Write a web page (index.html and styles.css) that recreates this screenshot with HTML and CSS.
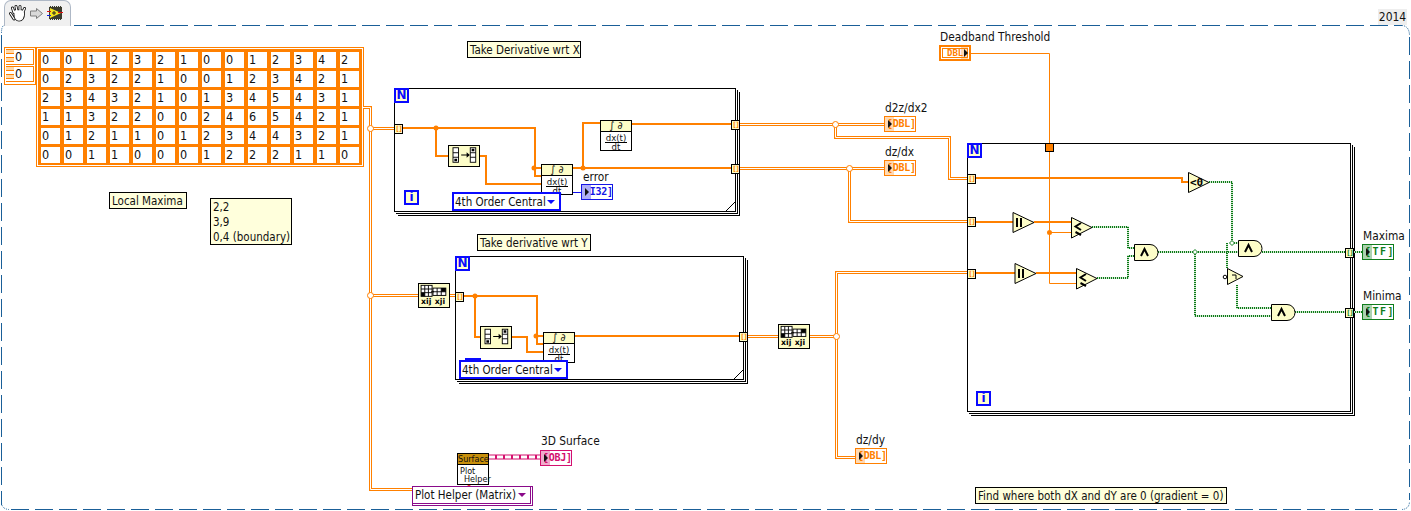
FILE: index.html
```html
<!DOCTYPE html>
<html lang="en">
<head>
<meta charset="utf-8">
<title>Block diagram</title>
<link rel="stylesheet" href="styles.css">
</head>
<body>
<div class="canvas">
  <svg class="defs" width="0" height="0" aria-hidden="true">
    <defs>
      <symbol id="rev" viewBox="0 0 32 22">
        <g class="ic">
          <rect x="5" y="3" width="6" height="16"/><path d="M5 8.500H11M5 13.500H11"/>
          <rect x="24" y="3" width="6" height="16"/><path d="M24 8.500H30M24 13.500H30"/>
        </g>
        <path class="ic-b" d="M6.500 15h3v3h-3zM25.500 4h3v3h-3z"/>
        <path class="ic-b" d="M14 10.500H20V8L23.500 11L20 14V11.500H14Z"/>
      </symbol>
      <symbol id="tr" viewBox="0 0 32 24">
        <g class="ic">
          <rect x="3" y="2" width="12" height="12"/><path d="M3 6H15M3 10H15M7 2V14M11 2V14"/>
          <rect x="16" y="5" width="14" height="8"/><path d="M16 9H30M20.500 5V13M25 5V13"/>
        </g>
        <path class="ic-b" d="M3 10h4v4h-4zM25 5h5v4h-5zM14 8.500h3v1h-3z"/>
        <text class="ic-t" x="3" y="22">xij</text>
        <text class="ic-t" x="18" y="22">xji</text>
      </symbol>
    </defs>
  </svg>

  <svg class="frame" width="1411" height="511" aria-hidden="true">
    <path class="dash" d="M74 25.500H1402"/>
    <path class="dash" d="M1.500 35V505"/>
    <path class="dash" d="M11 509.500H1400"/>
    <path class="dash" d="M1409.500 37V500"/>
    <path class="dots" d="M1.500 33Q1.500 26 4 25.500M1402 25.500Q1409 26 1409.500 35M1.500 503Q2 509 9 509.500M1402 509.500Q1409 509 1409.500 502"/>
  </svg>

  <div class="tab">
    <svg width="67" height="25" viewBox="4 0 67 25" aria-label="toolbar icons">
      <g class="hand-o">
        <path d="M14 19L10.500 13.500M14 12.500L12.500 8M17 11L16 6.500M20 11L20 6.500M23 12L24.500 8.500M15 14C15 18 17 20 19 20C22 20 23.500 17 23.500 13L22 11L15 11Z"/>
      </g>
      <g class="hand-i">
        <path d="M14 19L10.500 13.500M14 12.500L12.500 8M17 11L16 6.500M20 11L20 6.500M23 12L24.500 8.500M15 14C15 18 17 20 19 20C22 20 23.500 17 23.500 13L22 11L15 11Z"/>
      </g>
      <polygon class="run" points="30.500,11 36.500,11 36.500,8.500 42.500,13.500 36.500,18.500 36.500,16 30.500,16"/>
      <rect class="film" x="49" y="6" width="13" height="14"/>
      <path class="perf" d="M49 6.500H62M49 19.500H62"/>
      <polygon class="vi-tri" points="50,8 61,13 50,18"/>
      <path class="vi-m" d="M52 13H56M54 11V15"/>
      <path class="vi-r" d="M47 11.500H51M58 12.500H63"/>
      <path class="vi-b" d="M47 15.500H51"/>
    </svg>
  </div>
  <div class="version">2014</div>

  <div class="index">
    <div class="index-row"><span class="inc"></span><span class="idx-val">0</span></div>
    <div class="index-row"><span class="inc"></span><span class="idx-val">0</span></div>
  </div>
  <div class="array">
    <div class="array-grid">
      <span>0</span><span>0</span><span>1</span><span>2</span><span>3</span><span>2</span><span>1</span><span>0</span><span>0</span><span>1</span><span>2</span><span>3</span><span>4</span><span>2</span>
      <span>0</span><span>2</span><span>3</span><span>2</span><span>2</span><span>1</span><span>0</span><span>0</span><span>1</span><span>2</span><span>3</span><span>4</span><span>2</span><span>1</span>
      <span>2</span><span>3</span><span>4</span><span>3</span><span>2</span><span>1</span><span>0</span><span>1</span><span>3</span><span>4</span><span>5</span><span>4</span><span>3</span><span>1</span>
      <span>1</span><span>1</span><span>3</span><span>2</span><span>2</span><span>0</span><span>0</span><span>2</span><span>4</span><span>6</span><span>5</span><span>4</span><span>2</span><span>1</span>
      <span>0</span><span>1</span><span>2</span><span>1</span><span>1</span><span>0</span><span>1</span><span>2</span><span>3</span><span>4</span><span>4</span><span>3</span><span>2</span><span>1</span>
      <span>0</span><span>0</span><span>1</span><span>1</span><span>0</span><span>0</span><span>0</span><span>1</span><span>2</span><span>2</span><span>2</span><span>1</span><span>1</span><span>0</span>
    </div>
  </div>

  <div class="note c-lm">Local Maxima</div>
  <div class="note c-pts">2,2<br>3,9<br>0,4 (boundary)</div>
  <div class="note c-x">Take Derivative wrt X</div>
  <div class="note c-y">Take derivative wrt Y</div>
  <div class="note c-g">Find where both dX and dY are 0 (gradient = 0)</div>

  <!-- structures -->
  <div class="loop l1"><span class="ear"></span></div>
  <div class="loop l2"><span class="ear"></span></div>
  <div class="loop l3"></div>

  <!-- wires and gates -->
  <svg class="wires" width="1411" height="511" aria-hidden="true">
    <defs>
      <path id="dw" d="M363 107.500H370.500V489.500H412M370 128.500H395M370 295.500H418M450 295.500H456M739 124.500H884M739 168.500H884M835.500 124.500V137.500H949.500V178.500H967M849.500 168.500V221.500H967M743 336.500H778M810 336.500H836.500M967 272.500H836.500V457.500H855"/>
      <path id="gw" d="M1092 227H1128V248H1134M1097 278H1128V256H1134M1158 252H1238M1262 252H1345M1353 252H1362M1295 312H1345M1353 312H1362M1195 252V316H1271M1209 182H1232V243H1238M1227 243V268M1237 285V308H1271"/>
    </defs>
    <use class="dw-o" href="#dw"/>
    <use class="dw-i" href="#dw"/>
    <g class="nodes">
      <circle cx="370.500" cy="128.500" r="3"/>
      <circle cx="370.500" cy="295.500" r="3"/>
      <circle cx="835.500" cy="124.500" r="3"/>
      <circle cx="849.500" cy="168.500" r="3"/>
      <circle cx="836.500" cy="336.500" r="3"/>
    </g>
    <path class="w2" d="M403 128H535V176H541M436 128V156H448M480 156H486V184H541M534 168H541M573 168H731M583 168V123H600M632 124H731M464 296H537V344H543M475 296V337H480M512 337H527V352H543M536 336H543M575 336H739M975 178H1182V182H1188M975 222H1013M1034 222H1071M975 273H1015M1036 273H1076"/>
    <g class="dots-o">
      <circle cx="436" cy="128" r="2.500"/><circle cx="534" cy="168" r="2.500"/><circle cx="583" cy="168" r="2.500"/>
      <circle cx="475" cy="296" r="2.500"/><circle cx="536" cy="336" r="2.500"/><circle cx="1049.500" cy="232.500" r="2.500"/>
    </g>
    <path class="w1" d="M971 53.500H1049.500V283.500H1076M1049.500 232.500H1071"/>
    <path class="wb" d="M573 192.500H581"/>
    <use class="wg-u" href="#gw"/>
    <use class="wg" href="#gw"/>
    <path class="diam" d="M1195 249.500L1197.500 252L1195 254.500L1192.500 252ZM1232 240.500L1234.500 243L1232 245.500L1229.500 243Z"/>
    <path class="wp-o" d="M489 457H541"/>
    <path class="wp-i" d="M489 457H541"/>

    <!-- gates -->
    <g class="gate">
      <polygon points="1013,212.500 1034,222.500 1013,232.500"/>
      <polygon points="1015,263.500 1036,273.500 1015,283.500"/>
      <polygon points="1071.500,217.500 1092,227.500 1071.500,238"/>
      <polygon points="1076.500,268.500 1097,278.500 1076.500,289"/>
      <polygon points="1188.500,172.500 1209,182.500 1188.500,192.500"/>
      <polygon points="1227.500,268.500 1243,276.500 1227.500,284.500"/>
      <path d="M1134.500 244.500H1150A8 8 0 0 1 1150 260.500H1134.500Z"/>
      <path d="M1238.500 240.500H1254A8 8 0 0 1 1254 256.500H1238.500Z"/>
      <path d="M1271.500 304.500H1287A8 8 0 0 1 1287 320.500H1271.500Z"/>
    </g>
    <path class="mark" d="M1017 218V227M1021 218V227M1019 269V278M1023 269V278"/>
    <path class="mark" d="M1081 223L1075.500 226.500L1081 230M1075.500 232L1081 235M1086 274L1080.500 277.500L1086 281M1080.500 283L1086 286"/>
    <path class="mark" d="M1141 256L1144.500 249L1148 256M1245 252L1248.500 245L1252 252M1278 316L1281.500 309L1285 316"/>
    <path class="mark-s" d="M1232 275H1236V279"/>
    <circle class="bubble" cx="1225" cy="277" r="1.800"/>
    <text class="lt0" x="1190" y="186">&lt;0</text>
    <circle class="red" cx="469" cy="484" r="2"/>
  </svg>

  <!-- tunnels -->
  <span class="tun t-o t1">[]</span>
  <span class="tun t-o t2">[]</span>
  <span class="tun t-o t3">[]</span>
  <span class="tun t-o t4">[]</span>
  <span class="tun t-o t5">[]</span>
  <span class="tun t-o t6">[]</span>
  <span class="tun t-o t7">[]</span>
  <span class="tun t-o t8">[]</span>
  <span class="tun t-g t9">[]</span>
  <span class="tun t-g t10">[]</span>
  <span class="shift"></span>

  <span class="tag n1">N</span><span class="tag i1">i</span>
  <span class="tag n2">N</span>
  <span class="tag n3">N</span><span class="tag i3">i</span>

  <!-- primitives -->
  <div class="prim p-rev1"><svg width="30" height="20" viewBox="1 1 30 20"><use href="#rev"/></svg></div>
  <div class="prim p-rev2"><svg width="30" height="21" viewBox="1 1 30 20"><use href="#rev"/></svg></div>
  <div class="prim p-tr1"><svg width="30" height="23" viewBox="1 1 30 22"><use href="#tr"/></svg></div>
  <div class="prim p-tr2"><svg width="30" height="23" viewBox="1 1 30 22"><use href="#tr"/></svg></div>

  <div class="deriv d-top"><div class="d-hd">∫ ∂</div><div class="d-frac"><span class="d-num">dx(t)</span><span class="d-den">dt</span></div></div>
  <div class="deriv d-a"><div class="d-hd">∫ ∂</div><div class="d-frac"><span class="d-num">dx(t)</span><span class="d-den">dt</span></div></div>
  <div class="deriv d-b"><div class="d-hd">∫ ∂</div><div class="d-frac"><span class="d-num">dx(t)</span><span class="d-den">dt</span></div></div>

  <div class="plot">
    <div class="plot-hd">Surface</div>
    <div class="plot-body"><span>Plot</span><span class="plot-h">Helper</span></div>
  </div>

  <span class="blip"></span>
  <div class="ring ring-a">4th Order Central<span class="caret"></span></div>
  <div class="ring ring-b">4th Order Central<span class="caret"></span></div>
  <div class="ring-p"><div class="ring-p-in">Plot Helper (Matrix)<span class="caret caret-p"></span></div></div>

  <!-- labels and terminals -->
  <span class="label la-dead">Deadband Threshold</span>
  <div class="ctl-dbl"><div class="ctl-in">DBL<span class="ctl-tint"></span></div></div>

  <span class="label la-d2">d2z/dx2</span>
  <div class="term or i-d2"><span class="tint"></span>[DBL]</div>
  <span class="label la-dx">dz/dx</span>
  <div class="term or i-dx"><span class="tint"></span>[DBL]</div>
  <span class="label la-dy">dz/dy</span>
  <div class="term or i-dy"><span class="tint"></span>[DBL]</div>
  <span class="label la-err">error</span>
  <div class="term bl i-err"><span class="tint"></span>&nbsp;I32]</div>
  <span class="label la-3d">3D Surface</span>
  <div class="term pk i-3d"><span class="tint"></span>[OBJ]</div>
  <span class="label la-max">Maxima</span>
  <div class="term gr i-max"><span class="tint"></span>[TF]</div>
  <span class="label la-min">Minima</span>
  <div class="term gr i-min"><span class="tint"></span>[TF]</div>
</div>
</body>
</html>
```
FILE: styles.css
```css
* { box-sizing: border-box; }
html, body { margin: 0; padding: 0; background: #fff; }
body { font-family: "DejaVu Sans Condensed", "Noto Sans", "Liberation Sans", sans-serif; font-size: 11.500px; color: #111; overflow: hidden; }

.canvas { position: relative; width: 1411px; height: 511px; overflow: hidden; background: #fff; }
.defs { position: absolute; }
.frame, .wires { position: absolute; left: 0; top: 0; }
.dash { fill: none; stroke: #1a5f98; stroke-width: 1; stroke-dasharray: 18 6; }
.dots { fill: none; stroke: #1a5f98; stroke-width: 1; stroke-dasharray: 1 1; }

/* toolbar tab */
.tab { position: absolute; left: 4px; top: 0; width: 67px; height: 26px; border: 1px solid #aeb8c6; border-bottom: 0; border-top-left-radius: 7px; border-top-right-radius: 7px; background: #f0f0f0; overflow: hidden; }
.tab svg { display: block; margin: -1px 0 0 -1px; }
.hand-o path { fill: none; stroke: #111; stroke-width: 3; stroke-linecap: round; stroke-linejoin: round; }
.hand-i path { fill: #fff; stroke: #fff; stroke-width: 1.300; stroke-linecap: round; stroke-linejoin: round; }
.run { fill: #d9d9d9; stroke: #7d7d7d; stroke-width: 1; }
.film { fill: #3a3a2c; }
.perf { stroke: #e8e8e8; stroke-width: 1; stroke-dasharray: 1 1; fill: none; }
.vi-tri { fill: #f5e31a; }
.vi-m { stroke: #222; stroke-width: 1; fill: none; }
.vi-r { stroke: #e01010; stroke-width: 1; fill: none; }
.vi-b { stroke: #1020e0; stroke-width: 1; fill: none; }
.version { position: absolute; left: 1378px; top: 9px; width: 29px; height: 16px; background: #eeeeee; text-align: center; line-height: 16px; font-size: 12px; color: #111; }

/* array */
.index { position: absolute; left: 4px; top: 47px; width: 32px; height: 38px; border: 1px solid #ff8000; padding: 1px; display: flex; flex-direction: column; gap: 1px; background: #fff; }
.index-row { display: flex; height: 16px; background: #ff8000; padding: 1px 1px 1px 0; }
.inc { width: 8px; background: repeating-linear-gradient(#ffd9a8 0 3px, #ff8000 3px 4px, #fff 4px 7px, #ff8000 7px 8px); }
.idx-val { flex: 1; background: #fff; line-height: 14px; padding-left: 1px; font-size: 12.500px; }
.array { position: absolute; left: 36px; top: 47px; width: 328px; height: 120px; border: 1px solid #ff8000; padding: 1px; background: #fff; }
.array-grid { height: 100%; background: #ff8000; padding: 3px 3px 2px 3px; display: grid; grid-template-columns: repeat(14, 19px); grid-auto-rows: 16px; column-gap: 4px; row-gap: 3px; }
.array-grid span { background: #fff; line-height: 16px; padding-left: 1px; font-size: 12.500px; }

/* comments */
.note { position: absolute; background: #ffffdc; border: 1px solid #000; line-height: 15px; padding: 1px 1px 0 2px; white-space: nowrap; }
.c-lm { left: 109px; top: 192px; width: 78px; height: 17px; }
.c-pts { left: 210px; top: 198px; width: 82px; height: 47px; }
.c-x { left: 467px; top: 41px; width: 114px; height: 17px; }
.c-y { left: 477px; top: 234px; width: 114px; height: 17px; }
.c-g { left: 975px; top: 487px; width: 252px; height: 17px; }

/* structures */
.loop { position: absolute; background: #fff; border: 1px solid #000; box-shadow: 1px 1px 0 #fff, 2px 2px 0 #000, 3px 3px 0 #fff, 4px 4px 0 #000; }
.l1 { left: 394px; top: 88px; width: 342px; height: 124px; }
.l2 { left: 455px; top: 256px; width: 289px; height: 124px; }
.l3 { left: 967px; top: 143px; width: 384px; height: 269px; }
.ear { position: absolute; right: 0; bottom: 0; width: 9px; height: 9px; background: linear-gradient(135deg, #fff 47%, #000 47% 54%, #fff 54%); }

/* wires */
.dw-o { fill: none; stroke: #ff8000; stroke-width: 3; }
.dw-i { fill: none; stroke: #fff; stroke-width: 1; }
.nodes circle { fill: #fff; stroke: #ff8000; stroke-width: 1; }
.w2 { fill: none; stroke: #ff8000; stroke-width: 2; }
.w1 { fill: none; stroke: #ff8000; stroke-width: 1; }
.wb { fill: none; stroke: #1010ee; stroke-width: 1; }
.wg-u { fill: none; stroke: #cfe6cf; stroke-width: 2; }
.wg { fill: none; stroke: #0c7a18; stroke-width: 2; stroke-dasharray: 1 1; }
.diam { fill: #fff; stroke: #0f7d1c; stroke-width: 1; }
.dots-o circle { fill: #ff8000; }
.wp-o { fill: none; stroke: #d4106e; stroke-width: 5; }
.wp-i { fill: none; stroke: #fff; stroke-width: 3; stroke-dasharray: 6 2; }
.gate polygon, .gate path { fill: #fdfdc8; stroke: #000; stroke-width: 1; }
.mark { fill: none; stroke: #000; stroke-width: 2; }
.mark-s { fill: none; stroke: #000; stroke-width: 1; }
.bubble { fill: #fff; stroke: #000; stroke-width: 1; }
.lt0 { font-family: "DejaVu Sans Mono", monospace; font-weight: 700; font-size: 11px; fill: #000; }
.red { fill: #f01010; }

/* tunnels */
.tun { position: absolute; width: 9px; height: 10px; background: #fdfdc8; border: 1px solid #000; font-family: "DejaVu Sans Mono", monospace; font-weight: 700; font-size: 7px; line-height: 8px; text-align: center; letter-spacing: -1px; }
.t-o { color: #ff8000; }
.t-g { color: #0f7d1c; }
.t1 { left: 394px; top: 124px; }
.t2 { left: 731px; top: 120px; }
.t3 { left: 731px; top: 164px; }
.t4 { left: 455px; top: 292px; }
.t5 { left: 739px; top: 332px; }
.t6 { left: 967px; top: 174px; }
.t7 { left: 967px; top: 217px; }
.t8 { left: 967px; top: 269px; }
.t9 { left: 1345px; top: 248px; }
.t10 { left: 1345px; top: 308px; }
.shift { position: absolute; left: 1045px; top: 143px; width: 9px; height: 9px; background: #ff8000; border: 1px solid #000; }

/* N and i */
.tag { position: absolute; width: 15px; height: 15px; border: 2px solid #0a0aff; background: #ffffcc; color: #0a0aff; font-family: "DejaVu Sans", sans-serif; font-weight: 700; font-size: 12px; line-height: 11px; text-align: center; }
.n1 { left: 394px; top: 88px; }
.i1 { left: 404px; top: 190px; }
.n2 { left: 455px; top: 256px; }
.n3 { left: 967px; top: 143px; }
.i3 { left: 976px; top: 391px; }

/* primitives */
.prim { position: absolute; width: 32px; background: #fdfdc8; border: 1px solid #000; }
.prim svg { display: block; }
.p-rev1 { left: 448px; top: 145px; height: 22px; }
.p-rev2 { left: 480px; top: 326px; height: 23px; }
.p-tr1 { left: 418px; top: 283px; height: 25px; }
.p-tr2 { left: 778px; top: 324px; height: 25px; }
.ic rect, .ic path { fill: #fff; stroke: #000; stroke-width: 1; }
.ic-b { fill: #000; }
.ic-t { font-family: "DejaVu Sans", sans-serif; font-weight: 700; font-size: 8.500px; fill: #000; }

.deriv { position: absolute; width: 32px; height: 31px; background: #fff; border: 1px solid #000; font-size: 10px; line-height: 10px; text-align: center; }
.d-hd { height: 11px; background: #fdfdc8; border-bottom: 1px solid #000; font-family: "DejaVu Sans", sans-serif; line-height: 10px; }
.d-frac { display: flex; flex-direction: column; align-items: center; font-size: 9.500px; padding-top: 1px; }
.d-num { border-bottom: 1px solid #000; padding: 0 1px; line-height: 9px; height: 10px; }
.d-den { line-height: 8px; }
.d-top { left: 600px; top: 120px; }
.d-a { left: 541px; top: 164px; }
.d-b { left: 543px; top: 332px; }

.plot { position: absolute; left: 457px; top: 453px; width: 32px; height: 32px; border: 1px solid #000; background: #fff; font-size: 9px; line-height: 8px; }
.plot-hd { height: 11px; background: #c8900c; border-bottom: 1px solid #000; line-height: 10px; text-align: center; white-space: nowrap; }
.plot-body { display: flex; flex-direction: column; padding: 2px 0 0 2px; }
.plot-h { padding-left: 4px; }

/* rings */
.ring { position: absolute; background: #fff; border: 2px solid #0a0aff; color: #111; line-height: 16px; padding-left: 1px; white-space: nowrap; }
.ring-a { left: 452px; top: 192px; width: 109px; height: 19px; }
.ring-b { left: 459px; top: 360px; width: 109px; height: 19px; }
.blip { position: absolute; left: 465px; top: 358px; width: 16px; height: 2px; background: #0a0aff; }
.caret { position: absolute; right: 4px; top: 6px; width: 0; height: 0; border-left: 4px solid transparent; border-right: 4px solid transparent; border-top: 4px solid #0a0aff; }
.caret-p { border-top-color: #8a0a8a; top: 6px; }
.ring-p { position: absolute; left: 412px; top: 486px; width: 121px; height: 20px; border: 1px solid #8a0a8a; background: #fff; }
.ring-p-in { position: relative; width: 118px; height: 17px; border: 1px solid #8a0a8a; border-width: 0 1px 1px 0; line-height: 17px; padding-left: 2px; white-space: nowrap; }

/* labels and terminals */
.label { position: absolute; line-height: 14px; white-space: nowrap; font-size: 11.800px; }
.la-dead { left: 940px; top: 30px; }
.la-d2 { left: 885px; top: 101px; }
.la-dx { left: 885px; top: 145px; }
.la-dy { left: 856px; top: 433px; }
.la-err { left: 583px; top: 170px; }
.la-3d { left: 541px; top: 434px; }
.la-max { left: 1363px; top: 229px; }
.la-min { left: 1363px; top: 289px; }

.term { position: absolute; width: 32px; height: 16px; border: 1px solid; background: #fff; font-family: "DejaVu Sans Mono", monospace; font-weight: 700; font-size: 10px; line-height: 14px; padding-left: 2px; letter-spacing: -0.300px; white-space: nowrap; }
.tint { position: absolute; left: 0; top: 0; width: 9px; height: 14px; }
.tint::after { content: ""; position: absolute; left: 3px; top: 3px; width: 0; height: 0; border-top: 4px solid transparent; border-bottom: 4px solid transparent; border-left: 4px solid #111; }
.or { color: #ff8000; border-color: #ff8000; }
.or .tint { background: rgba(255, 128, 0, .3); }
.bl { color: #1414e6; border-color: #1414e6; }
.bl .tint { background: rgba(20, 20, 230, .35); }
.pk { color: #d4106e; border-color: #d4106e; }
.pk .tint { background: rgba(212, 16, 110, .35); }
.gr { color: #0f7d1c; border-color: #0f7d1c; letter-spacing: 1.500px; }
.gr .tint { background: rgba(15, 125, 28, .35); }
.i-d2 { left: 884px; top: 116px; }
.i-dx { left: 884px; top: 160px; }
.i-dy { left: 855px; top: 448px; }
.i-err { left: 581px; top: 184px; }
.i-3d { left: 540px; top: 450px; }
.i-max { left: 1362px; top: 244px; }
.i-min { left: 1362px; top: 304px; }

.ctl-dbl { position: absolute; left: 939px; top: 45px; width: 32px; height: 16px; border: 2px solid #ff8000; background: #fff; padding: 1px; }
.ctl-in { position: relative; height: 10px; border: 1px solid #ff8000; color: #ff8000; font-family: "DejaVu Sans Mono", monospace; font-weight: 700; font-size: 9px; line-height: 8px; padding-left: 4px; }
.ctl-tint { position: absolute; right: -1px; top: -2px; width: 7px; height: 12px; background: rgba(255, 128, 0, .3); }
.ctl-tint::after { content: ""; position: absolute; right: 0; top: 2px; width: 0; height: 0; border-top: 4px solid transparent; border-bottom: 4px solid transparent; border-left: 4px solid #111; }
```
